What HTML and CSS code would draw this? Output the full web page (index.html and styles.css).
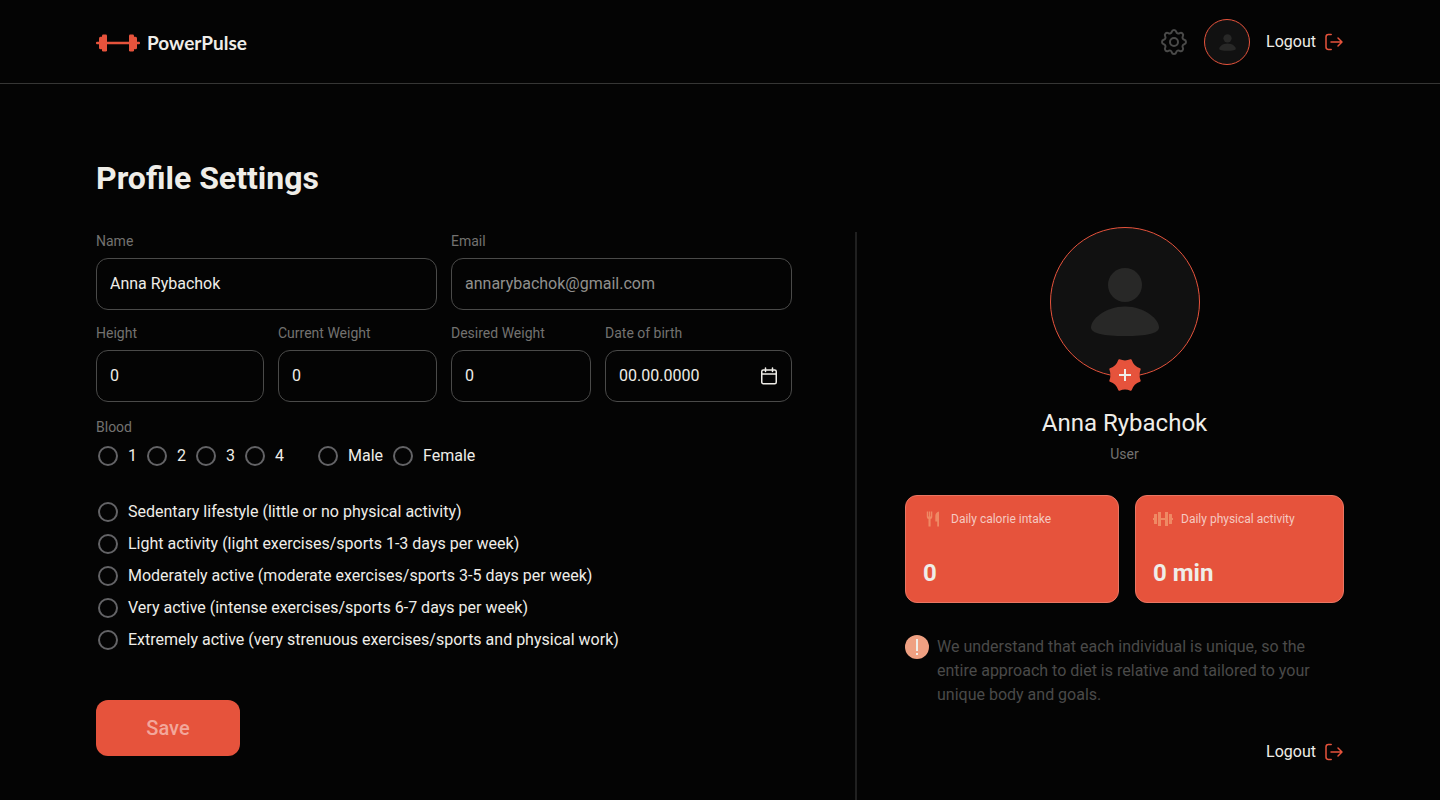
FILE: index.html
```html
<!DOCTYPE html>
<html lang="en">
<head>
<meta charset="utf-8">
<meta name="viewport" content="width=device-width, initial-scale=1">
<title>PowerPulse – Profile Settings</title>
<link rel="stylesheet" href="styles.css">
</head>
<body>
<svg class="sprite" aria-hidden="true">
  <symbol id="icon-logout" viewBox="0 0 20 20">
    <path d="M7.200 2.500H4.400a2.400 2.400 0 0 0-2.400 2.400v10.200a2.400 2.400 0 0 0 2.400 2.400h2.800M7 10h10.800M14 6l4 4-4 4"/>
  </symbol>
  <symbol id="icon-user" viewBox="0 0 70 68">
    <circle cx="35" cy="17" r="17"/>
    <path d="M35 38.500c20 0 34 13 34 21 0 6-13 8.500-34 8.500s-34-2.500-34-8.500c0-8 14-21 34-21z"/>
  </symbol>
</svg>

<header class="header">
  <a class="logo" href="#">
    <svg class="logo-icon" viewBox="0 0 44 18" aria-hidden="true">
      <rect x="0" y="7.750" width="44" height="2.500" rx="1"/>
      <rect x="3" y="2.750" width="5" height="12.500" rx="1.500"/>
      <rect x="6" y="0.500" width="5" height="17" rx="1.200"/>
      <rect x="33" y="0.500" width="5" height="17" rx="1.200"/>
      <rect x="36" y="2.750" width="5" height="12.500" rx="1.500"/>
    </svg>
    <span>PowerPulse</span>
  </a>
  <div class="header-actions">
    <button class="icon-button" type="button" aria-label="Settings">
      <svg class="gear" viewBox="1.500 1.500 21 21" aria-hidden="true">
        <path d="M10.325 4.317c.426-1.756 2.924-1.756 3.350 0a1.724 1.724 0 0 0 2.573 1.066c1.543-.94 3.310.826 2.370 2.370a1.724 1.724 0 0 0 1.065 2.572c1.756.426 1.756 2.924 0 3.350a1.724 1.724 0 0 0-1.066 2.573c.94 1.543-.826 3.310-2.370 2.370a1.724 1.724 0 0 0-2.572 1.065c-.426 1.756-2.924 1.756-3.350 0a1.724 1.724 0 0 0-2.573-1.066c-1.543.94-3.310-.826-2.370-2.370a1.724 1.724 0 0 0-1.065-2.572c-1.756-.426-1.756-2.924 0-3.350a1.724 1.724 0 0 0 1.066-2.573c-.94-1.543.826-3.310 2.370-2.370c1 .608 2.296.07 2.572-1.065z"/>
        <circle cx="12" cy="12" r="3"/>
      </svg>
    </button>
    <div class="avatar avatar-small"><svg class="avatar-icon" aria-hidden="true"><use href="#icon-user"/></svg></div>
    <button class="logout" type="button">Logout <svg class="logout-icon" aria-hidden="true"><use href="#icon-logout"/></svg></button>
  </div>
</header>

<main class="main">
  <h1 class="title">Profile Settings</h1>
  <div class="columns">
    <form class="form">
      <div class="fields">
        <div class="field field-wide"><label for="name">Name</label><input id="name" type="text" value="Anna Rybachok"></div>
        <div class="field field-wide"><label for="email">Email</label><input class="muted" id="email" type="email" value="annarybachok@gmail.com" readonly></div>
        <div class="field"><label for="height">Height</label><input id="height" type="text" value="0"></div>
        <div class="field"><label for="current">Current Weight</label><input id="current" type="text" value="0"></div>
        <div class="field"><label for="desired">Desired Weight</label><input id="desired" type="text" value="0"></div>
        <div class="field">
          <label for="birth">Date of birth</label>
          <div class="date-box">
            <input id="birth" type="text" value="00.00.0000">
            <button class="icon-button" type="button" aria-label="Open calendar">
              <svg class="calendar" viewBox="0 0 18 18" aria-hidden="true"><rect x="1.750" y="3" width="14.500" height="13.750" rx="1.500"/><path d="M1.750 7h14.500M5.500 1v3.500M12.500 1v3.500"/></svg>
            </button>
          </div>
        </div>
      </div>

      <div class="groups">
        <span class="group-label" id="blood-label">Blood</span>
        <div class="radio-row">
          <div class="radios" role="radiogroup" aria-labelledby="blood-label">
            <label class="radio"><input type="radio" name="blood">1</label>
            <label class="radio"><input type="radio" name="blood">2</label>
            <label class="radio"><input type="radio" name="blood">3</label>
            <label class="radio"><input type="radio" name="blood">4</label>
          </div>
          <div class="radios" role="radiogroup" aria-label="Sex">
            <label class="radio"><input type="radio" name="sex">Male</label>
            <label class="radio"><input type="radio" name="sex">Female</label>
          </div>
        </div>
      </div>

      <div class="activity" role="radiogroup" aria-label="Activity level">
        <label class="radio"><input type="radio" name="activity">Sedentary lifestyle (little or no physical activity)</label>
        <label class="radio"><input type="radio" name="activity">Light activity (light exercises/sports 1-3 days per week)</label>
        <label class="radio"><input type="radio" name="activity">Moderately active (moderate exercises/sports 3-5 days per week)</label>
        <label class="radio"><input type="radio" name="activity">Very active (intense exercises/sports 6-7 days per week)</label>
        <label class="radio"><input type="radio" name="activity">Extremely active (very strenuous exercises/sports and physical work)</label>
      </div>

      <button class="save" type="submit">Save</button>
    </form>

    <aside class="profile">
      <div class="avatar avatar-large">
        <svg class="avatar-icon" aria-hidden="true"><use href="#icon-user"/></svg>
        <button class="icon-button add-photo" type="button" aria-label="Upload photo">
          <svg class="badge" viewBox="-16 -16 32 32" aria-hidden="true">
            <path class="badge-shape" d="M14.700 5.800Q12.400 0 14.700-5.800Q8-8 5.800-14.700Q0-12.400-5.800-14.700Q-8-8-14.700-5.800Q-12.400 0-14.700 5.800Q-8 8-5.800 14.700Q0 12.400 5.800 14.700Q8 8 14.700 5.800Z"/>
            <path class="badge-plus" d="M-6 0H6M0-6V6"/>
          </svg>
        </button>
      </div>
      <h2 class="user-name">Anna Rybachok</h2>
      <p class="user-role">User</p>

      <div class="cards">
        <section class="card">
          <div class="card-head">
            <svg class="card-icon" viewBox="0 0 20 20" aria-hidden="true"><path d="M3.800 2.500h1.300v5h.7v-5h1.400v5h.7v-5h1.400v5c0 1.500-.6 2.300-1.700 2.600v7.400H5.500v-7.400C4.400 9.800 3.800 9 3.800 7.500zM16 2.500v15h-1.800v-5H12.300V7c0-2.500 1.700-4.200 3.700-4.500z"/></svg>
            <h3>Daily calorie intake</h3>
          </div>
          <p class="card-value">0</p>
        </section>
        <section class="card">
          <div class="card-head">
            <svg class="card-icon" viewBox="0 0 20 20" aria-hidden="true"><path d="M0 9h1V5.500a.5.500 0 0 1 .5-.5H4v10H1.500a.5.500 0 0 1-.5-.5V11H0zM5 3h3v6h4V3h3v14h-3v-6H8v6H5zM16 5h2.500a.5.500 0 0 1 .5.500V9h1v2h-1v3.500a.5.500 0 0 1-.5.500H16z"/></svg>
            <h3>Daily physical activity</h3>
          </div>
          <p class="card-value">0 min</p>
        </section>
      </div>

      <div class="note">
        <svg class="note-icon" viewBox="0 0 24 24" aria-hidden="true"><circle cx="12" cy="12" r="12"/><path d="M11 4h2v12h-2zM11 18h2v2h-2z"/></svg>
        <p>We understand that each individual is unique, so the entire approach to diet is relative and tailored to your unique body and goals.</p>
      </div>

      <button class="logout" type="button">Logout <svg class="logout-icon" aria-hidden="true"><use href="#icon-logout"/></svg></button>
    </aside>
  </div>
</main>
</body>
</html>
```
FILE: styles.css
```css
:root {
  --bg: #040404;
  --text: #efede8;
  --accent: #e6533c;
  --line: #4a4a49;
  --muted: #737270;
}

* { box-sizing: border-box; }

body {
  display: flex;
  flex-direction: column;
  min-height: 100vh;
  margin: 0;
  background: var(--bg);
  color: var(--text);
  font: 16px/24px Roboto, "Liberation Sans", sans-serif;
}

h1, h2, h3, p { margin: 0; }

button, input { font: inherit; color: inherit; }

button {
  padding: 0;
  border: 0;
  background: none;
  cursor: pointer;
}

svg { display: block; flex: none; }

.sprite { position: absolute; width: 0; height: 0; }

.header {
  display: flex;
  align-items: center;
  justify-content: space-between;
  padding: 19px 96px 18px;
  border-bottom: 1px solid #363635;
}

.logo {
  display: flex;
  align-items: center;
  gap: 7px;
  padding-top: 2px;
  color: var(--text);
  font: 700 19px/24px Lato, sans-serif;
  text-decoration: none;
}

.logo-icon { width: 44px; height: 18px; fill: var(--accent); }

.header-actions { display: flex; align-items: center; gap: 16px; }

.gear {
  width: 28px;
  height: 28px;
  fill: none;
  stroke: var(--line);
  stroke-width: 1.5;
}

.avatar {
  display: flex;
  align-items: center;
  justify-content: center;
  border: 1px solid var(--accent);
  border-radius: 50%;
  background: #111;
}

.avatar-icon { fill: #282827; }
.avatar-small { width: 46px; height: 46px; }
.avatar-small .avatar-icon { width: 17px; height: 17px; }

.avatar-large {
  position: relative;
  width: 150px;
  height: 150px;
  margin-top: -5px;
}

.avatar-large .avatar-icon { width: 70px; height: 68px; }

.add-photo {
  position: absolute;
  bottom: -15px;
  left: 50%;
  transform: translateX(-50%);
}

.badge { width: 32px; height: 32px; }

.badge-shape {
  fill: var(--accent);
  stroke: var(--accent);
  stroke-width: 2;
  stroke-linejoin: round;
}

.badge-plus { fill: none; stroke: var(--text); stroke-width: 2; }

.logout { display: flex; align-items: center; gap: 8px; }

.logout-icon {
  width: 20px;
  height: 20px;
  fill: none;
  stroke: var(--accent);
  stroke-width: 1.5;
  stroke-linecap: round;
  stroke-linejoin: round;
}

.main {
  display: flex;
  flex: 1;
  flex-direction: column;
  padding: 72px 96px 0;
}

.title {
  margin-bottom: 32px;
  font-size: 32px;
  font-weight: 700;
  line-height: 44px;
}

.columns {
  display: grid;
  flex: 1;
  grid-template-columns: minmax(0, 696fr) minmax(0, 489fr);
  gap: 63px;
}

.form {
  display: flex;
  flex-direction: column;
  align-items: flex-start;
}

.fields {
  display: grid;
  grid-template-columns: 168fr 159fr 140fr 187fr;
  gap: 14px;
  width: 100%;
}

.field {
  display: flex;
  flex-direction: column;
  gap: 8px;
  min-width: 0;
}

.field-wide { grid-column: span 2; }

.field label, .group-label {
  color: var(--muted);
  font-size: 14px;
  line-height: 18px;
}

.field > input, .date-box {
  width: 100%;
  height: 52px;
  padding: 0 13px;
  border: 1px solid var(--line);
  border-radius: 12px;
  background: transparent;
}

.field > input { padding-bottom: 2px; }

.field .muted { color: #91908d; }

.date-box { display: flex; align-items: center; gap: 8px; }

.date-box input {
  flex: 1;
  min-width: 0;
  padding: 0;
  border: 0;
  background: transparent;
}

.calendar {
  width: 18px;
  height: 18px;
  fill: none;
  stroke: var(--text);
  stroke-width: 1.5;
  stroke-linecap: round;
}

.groups {
  display: flex;
  flex-direction: column;
  gap: 8px;
  margin-top: 16px;
}

.radio-row { display: flex; gap: 34px; padding-left: 2px; }
.radios { display: flex; gap: 10px; }
.radio { display: flex; align-items: center; gap: 10px; }

.radio input {
  width: 20px;
  height: 20px;
  margin: 0;
  border: 2px solid #636366;
  border-radius: 50%;
  appearance: none;
}

.radio input:checked { border-color: var(--accent); }

.activity {
  display: flex;
  flex-direction: column;
  gap: 8px;
  margin-top: 32px;
  padding-left: 2px;
}

.save {
  min-width: 144px;
  margin-top: 48px;
  padding: 16px 48px;
  border-radius: 12px;
  background: var(--accent);
  color: #f2a79b;
  font-size: 20px;
  font-weight: 500;
}

.profile {
  display: flex;
  flex-direction: column;
  align-items: center;
  padding: 0 0 36px 48px;
  border-left: 2px solid #202020;
}

.user-name {
  margin-top: 30px;
  font-size: 24px;
  font-weight: 400;
  line-height: 32px;
}

.user-role {
  margin-top: 6px;
  color: var(--muted);
  font-size: 14px;
  line-height: 18px;
}

.cards {
  display: grid;
  grid-template-columns: 214fr 209fr;
  gap: 16px;
  width: 100%;
  margin-top: 32px;
}

.card {
  display: flex;
  flex-direction: column;
  gap: 30px;
  padding: 13px 17px 15px;
  border: 1px solid #ea7562;
  border-radius: 12px;
  background: var(--accent);
}

.card-head { display: flex; align-items: center; gap: 8px; }
.card-icon { width: 20px; height: 20px; fill: #ef8964; }

.card h3 {
  color: #f5c9c1;
  font-size: 12px;
  font-weight: 400;
  line-height: 20px;
}

.card-value { font-size: 24px; font-weight: 700; line-height: 28px; }

.note {
  display: flex;
  gap: 8px;
  margin-top: 32px;
  padding-right: 16px;
  color: #4a4a49;
}

.note-icon { width: 24px; height: 24px; fill: #efa082; }
.note-icon path { fill: var(--text); }

.profile .logout { align-self: flex-end; margin-top: 33px; }
```
